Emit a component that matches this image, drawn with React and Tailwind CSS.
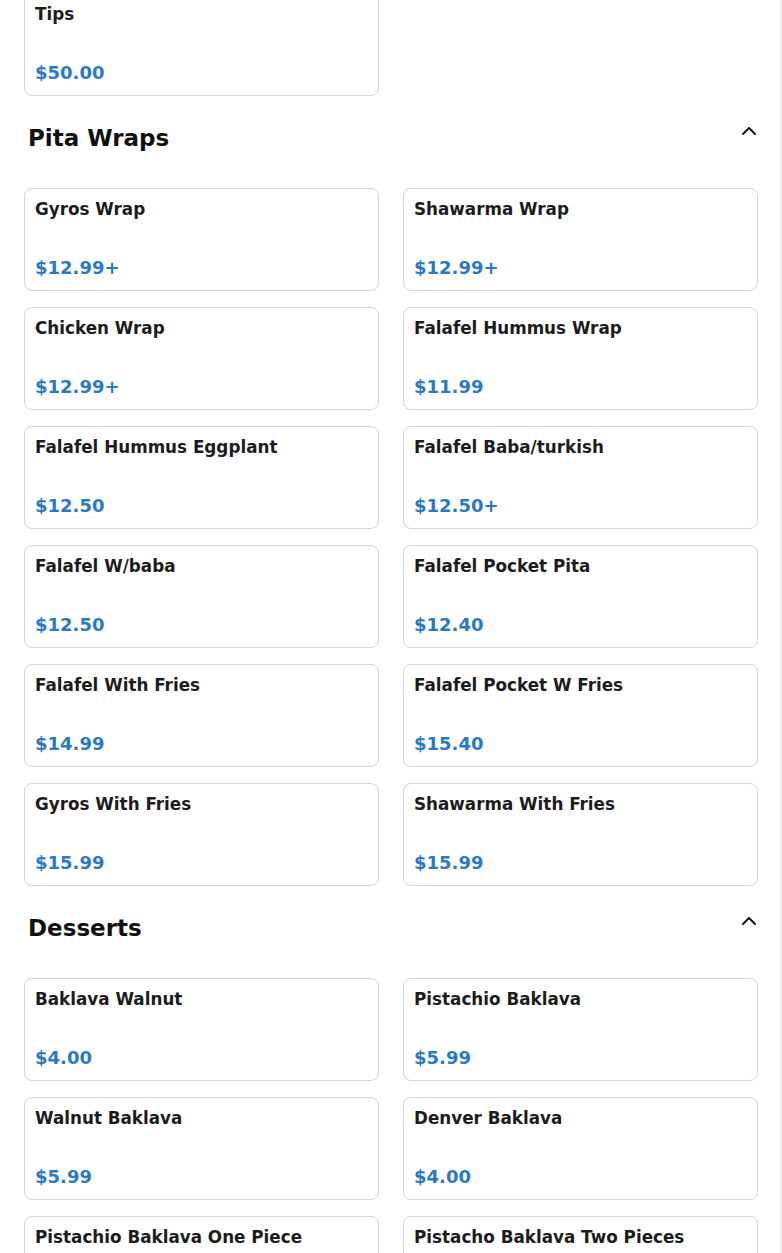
import React from "react";

const sections = [
  { title: null, items: [{ name: "Tips", price: "$50.00" }] },
  {
    title: "Pita Wraps",
    items: [
      { name: "Gyros Wrap", price: "$12.99+" },
      { name: "Shawarma Wrap", price: "$12.99+" },
      { name: "Chicken Wrap", price: "$12.99+" },
      { name: "Falafel Hummus Wrap", price: "$11.99" },
      { name: "Falafel Hummus Eggplant", price: "$12.50" },
      { name: "Falafel Baba/turkish", price: "$12.50+" },
      { name: "Falafel W/baba", price: "$12.50" },
      { name: "Falafel Pocket Pita", price: "$12.40" },
      { name: "Falafel With Fries", price: "$14.99" },
      { name: "Falafel Pocket W Fries", price: "$15.40" },
      { name: "Gyros With Fries", price: "$15.99" },
      { name: "Shawarma With Fries", price: "$15.99" },
    ],
  },
  {
    title: "Desserts",
    items: [
      { name: "Baklava Walnut", price: "$4.00" },
      { name: "Pistachio Baklava", price: "$5.99" },
      { name: "Walnut Baklava", price: "$5.99" },
      { name: "Denver Baklava", price: "$4.00" },
      { name: "Pistachio Baklava One Piece", price: "$5.99" },
      { name: "Pistacho Baklava Two Pieces", price: "$9.99" },
    ],
  },
];

function Card({ name, price }) {
  return (
    <div className="h-[103px] rounded-lg border border-[#d6d6d6] bg-white px-[10px] pt-[9px] pb-[9px] flex flex-col justify-between">
      <div className="text-[16.8px] leading-[22px] font-bold text-[#1c1c1c]">{name}</div>
      <div className="text-[18px] leading-[26px] font-bold text-[#2c79c3]">{price}</div>
    </div>
  );
}

function Chevron() {
  return (
    <svg width="24" height="24" viewBox="0 0 24 24" fill="none" stroke="#111" strokeWidth="2" strokeLinecap="round" strokeLinejoin="round" className="-mt-1 -mr-[3px] shrink-0">
      <path d="M6 15l6-6 6 6" />
    </svg>
  );
}

export default function App() {
  return (
    <div className="w-full min-h-screen bg-white border-r-2 border-[#efefef]" style={{ fontFamily: '"DejaVu Sans", sans-serif' }}>
      <div className="pl-6 pr-[22px] -mt-[7px]">
        {sections.map((s, i) => (
          <div key={i}>
            {s.title && (
              <div className="flex items-start justify-between pl-1 pt-[27px] pb-[35px]">
                <h2 className="text-[23px] leading-[30px] font-bold text-[#111]">{s.title}</h2>
                <Chevron />
              </div>
            )}
            <div className="grid grid-cols-2 gap-x-6 gap-y-4">
              {s.items.map((it) => (
                <Card key={it.name} {...it} />
              ))}
            </div>
          </div>
        ))}
      </div>
    </div>
  );
}
